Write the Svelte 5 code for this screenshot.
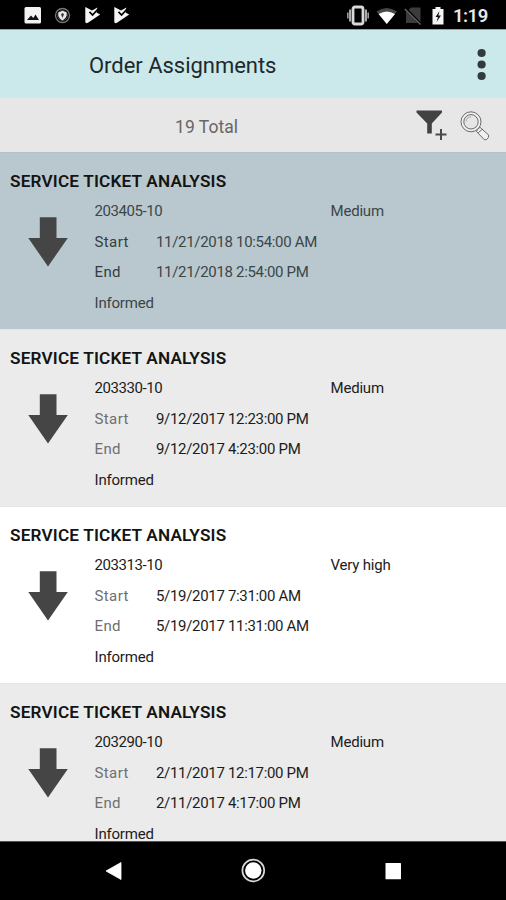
<script>
  const total = 19;

  const orders = [
    { id: '203405-10', priority: 'Medium', start: '11/21/2018 10:54:00 AM', end: '11/21/2018 2:54:00 PM', status: 'Informed', selected: true },
    { id: '203330-10', priority: 'Medium', start: '9/12/2017 12:23:00 PM', end: '9/12/2017 4:23:00 PM', status: 'Informed' },
    { id: '203313-10', priority: 'Very high', start: '5/19/2017 7:31:00 AM', end: '5/19/2017 11:31:00 AM', status: 'Informed' },
    { id: '203290-10', priority: 'Medium', start: '2/11/2017 12:17:00 PM', end: '2/11/2017 4:17:00 PM', status: 'Informed' },
  ];
</script>

<div class="screen">
  <div class="status-bar">
    <svg class="notifications" width="170" height="29" viewBox="0 0 170 29">
      <rect x="24.5" y="7" width="16.5" height="16.5" rx="1.5" fill="#f2f2f2" />
      <path d="M27 20 L31 15.5 L33.3 18 L35.5 14.5 L39 20 Z" fill="#111" />
      <circle cx="62.5" cy="15.5" r="7" fill="none" stroke="#777" stroke-width="1.3" />
      <circle cx="62.5" cy="15.5" r="5" fill="none" stroke="#444" stroke-width="1" />
      <path d="M58.3 12.4 L62.5 10.8 L66.7 12.4 V15.5 Q66.2 18.6 62.5 20.6 Q58.8 18.6 58.3 15.5 Z" fill="#e8e8e8" />
      <path d="M62.5 13 L64 14.3 L62.5 18 L61 14.3 Z" fill="#333" />
      {#each [85, 114] as x}
        <g transform="translate({x} 7)">
          <path d="M0.3 0 L7 3.5 L12.5 0.5 L11.5 5.5 L15.2 7.5 L3 15.8 Q0.3 17.2 0.3 14.5 Z" fill="#f5f5f5" />
          <path d="M4.5 4.8 L7.6 8 L13.5 1.5" fill="none" stroke="#000" stroke-width="1.7" />
        </g>
      {/each}
    </svg>
    <div class="system">
      <svg width="104" height="29" viewBox="346 0 104 29">
        <rect x="353" y="7" width="10" height="17" rx="2" fill="none" stroke="#d9d9d9" stroke-width="2.8" />
        <path d="M350 9.5 V21.5 M366 9.5 V21.5" stroke="#aaa" stroke-width="2" />
        <path d="M347.8 12.5 V18.5 M368.2 12.5 V18.5" stroke="#999" stroke-width="1.6" />
        <path d="M376.5 11.5 Q386.8 4.5 397 11.5 L386.8 24 Z" fill="#484848" />
        <path d="M378.6 14 Q386.8 9 395 14 L386.8 24 Z" fill="#fff" />
        <path d="M406 12 L411 7.5 H420.5 V23 H406 Z" fill="#3c3c3c" />
        <path d="M405.5 8.5 L421 24.5" stroke="#000" stroke-width="2.6" />
        <path d="M404.8 9 L420.5 24.5" stroke="#666" stroke-width="1.4" />
        <path d="M432.5 9 H435.5 V7 H440.5 V9 H443.5 V24.5 H432.5 Z" fill="#f5f5f5" />
        <path d="M439.5 11 L435.5 17 H438 L436.5 22 L441 15.5 H438.4 Z" fill="#111" />
      </svg>
      <span class="clock">1:19</span>
    </div>
  </div>

  <header class="header">
    <h1>Order Assignments</h1>
    <svg width="10" height="34" viewBox="0 0 10 34">
      <circle cx="4.6" cy="5" r="4.1" fill="#333a3d" />
      <circle cx="4.6" cy="16.5" r="4.1" fill="#333a3d" />
      <circle cx="4.6" cy="28" r="4.1" fill="#333a3d" />
    </svg>
  </header>

  <div class="toolbar">
    <span class="total">{total} Total</span>
    <svg width="80" height="54" viewBox="414 98 80 54">
      <path d="M416.5 110.5 H442 V112.5 L431.8 123.5 V133.5 H427.2 V123.5 L416.5 112.5 Z" fill="#424242" />
      <path d="M441 129 V140 M435.5 134.5 H446.5" stroke="#4a4a4a" stroke-width="2" />
      <g fill="#f0f0f0" stroke="#6a6a6a" stroke-width="1">
        <path d="M477.5 129.5 L480 127.3 L488.6 135 Q489.3 137.8 486.3 139.8 L484.2 139.6 L476.5 131.5 Z" />
        <circle cx="471" cy="121.8" r="10" />
        <circle cx="471" cy="121.8" r="7.2" fill="#e6e6e6" />
        <path d="M466 121.5 Q466.5 117 471 116.8" fill="none" stroke="#999" stroke-width="0.8" />
        <path d="M478.3 132.7 L482.3 129.3" fill="none" />
      </g>
    </svg>
  </div>

  <div class="orders">
    {#each orders as order, i}
      <div class="order" class:selected={order.selected} class:shaded={i % 2 === 1}>
        <h2>SERVICE TICKET ANALYSIS</h2>
        <div class="order-body">
          <svg class="arrow" width="40" height="50" viewBox="0 0 40 50">
            <path d="M11.8 0.3 H28.5 V21 H39.8 L20 49.5 L0.3 21 H11.8 Z" fill="#454545" />
          </svg>
          <div class="details">
            <div class="line first">
              <span class="order-id">{order.id}</span>
              <span>{order.priority}</span>
            </div>
            <div class="line">
              <span class="label">Start</span>
              <span class="date">{order.start}</span>
            </div>
            <div class="line">
              <span class="label">End</span>
              <span class="date">{order.end}</span>
            </div>
            <div class="line"><span>{order.status}</span></div>
          </div>
        </div>
      </div>
    {/each}
  </div>

  <nav class="nav-bar">
    <svg width="506" height="58" viewBox="0 0 506 58">
      <path d="M106 29 L121 20.5 V37.5 Z" fill="#fff" stroke="#fff" stroke-width="0.8" stroke-linejoin="round" />
      <circle cx="253.3" cy="28.5" r="10.9" fill="none" stroke="#d8d8d8" stroke-width="1.7" />
      <circle cx="253.3" cy="28.5" r="8.2" fill="#fff" />
      <rect x="385.5" y="21" width="15.5" height="16.3" rx="0.6" fill="#fff" />
    </svg>
  </nav>
</div>

<style>
  :global(body) {
    margin: 0;
    background: #000;
  }

  .screen {
    width: 506px;
    height: 900px;
    display: flex;
    flex-direction: column;
    overflow: hidden;
    font-family: Roboto, "Liberation Sans", sans-serif;
    background: #fff;
  }
  svg {
    display: block;
    flex-shrink: 0;
  }

  .status-bar {
    height: 29px;
    flex-shrink: 0;
    display: flex;
    justify-content: space-between;
    background: #000;
    border-bottom: 1px solid #8fa3a7;
  }
  .system {
    display: flex;
    width: 160px;
  }
  .clock {
    margin-left: 3px;
    font-size: 18.5px;
    font-weight: 600;
    line-height: 32px;
    letter-spacing: -0.5px;
    color: #e8e8e8;
  }

  .header {
    height: 68px;
    flex-shrink: 0;
    box-sizing: border-box;
    display: flex;
    justify-content: space-between;
    align-items: flex-start;
    padding: 18px 19px 0 89px;
    background: #cbe8eb;
  }
  h1 {
    margin: 0;
    font-size: 22px;
    font-weight: 400;
    line-height: 35px;
    letter-spacing: -0.03px;
    color: #20292c;
  }

  .toolbar {
    height: 55px;
    flex-shrink: 0;
    box-sizing: border-box;
    display: flex;
    justify-content: space-between;
    padding: 0 12px 0 175px;
    background: #e7e7e7;
    border-bottom: 1px solid #b3c3c8;
  }
  .total {
    font-size: 17.5px;
    line-height: 58px;
    letter-spacing: 0.05px;
    color: #666;
  }

  .orders {
    flex: 1;
    min-height: 0;
    overflow: hidden;
  }
  .order {
    height: 177.1px;
    box-sizing: border-box;
    padding-top: 14px;
    border-bottom: 1px solid #e3e5e5;
    background: #fff;
    color: #1c1c1c;
  }
  .order.shaded {
    background: #ebebeb;
  }
  .order.selected {
    background: #b9c8ce;
    color: #3b4649;
  }
  h2 {
    margin: 0 0 0 10px;
    font-size: 17.2px;
    font-weight: 600;
    line-height: 29px;
    letter-spacing: 0.17px;
    color: #141414;
  }
  .order-body {
    display: flex;
  }
  .arrow {
    margin: 21px 26.5px 0 28px;
  }
  .details {
    flex: 1;
    font-size: 15px;
    letter-spacing: -0.2px;
  }
  .line {
    display: grid;
    grid-template-columns: 61.5px 1fr;
    line-height: 30.5px;
    white-space: nowrap;
  }
  .line.first {
    grid-template-columns: 236px 1fr;
  }
  .order-id {
    letter-spacing: -0.42px;
  }
  .date {
    letter-spacing: -0.32px;
  }
  .label {
    letter-spacing: 0.4px;
    color: #707070;
  }
  .selected .label {
    color: #343e41;
  }

  .nav-bar {
    height: 58px;
    flex-shrink: 0;
    background: #000;
    border-top: 1px solid #555;
  }
</style>
